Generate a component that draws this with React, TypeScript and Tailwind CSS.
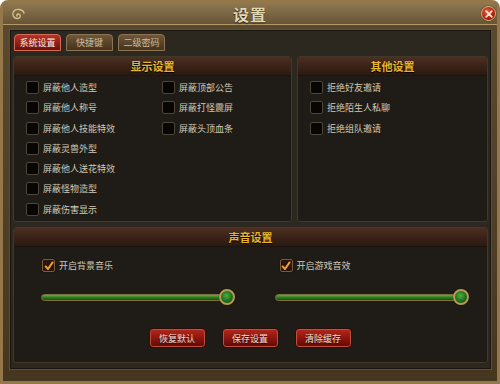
import React from "react";

const FONT = "font-['Noto_Sans_CJK_SC','Noto_Sans',sans-serif]";

function Check({ checked }: { checked?: boolean }) {
  if (checked) {
    return (
      <span className="w-[13px] h-[13px] rounded-[2px] border border-[#7a5b3c] bg-[#2c130b] flex items-center justify-center shrink-0 shadow-[0_0_1px_#000]">
        <svg width="10" height="10" viewBox="0 0 10 10">
          <path d="M1.6 5.4 L4 8 L8.6 1.4" stroke="#f2a431" strokeWidth="1.9" fill="none" strokeLinecap="round" strokeLinejoin="round" />
        </svg>
      </span>
    );
  }
  return <span className="w-[13px] h-[13px] rounded-[2px] border border-[#4d4638] bg-[#070605] shrink-0" />;
}

function Item({ label, checked }: { label: string; checked?: boolean }) {
  return (
    <div className="h-[13px] flex items-center gap-[4px]">
      <Check checked={checked} />
      <span className="text-[9px] leading-none text-[#d2c9b6] whitespace-nowrap">{label}</span>
    </div>
  );
}

function Header({ title }: { title: string }) {
  return (
    <div className="h-[19px] shrink-0 flex items-center justify-center bg-gradient-to-b from-[#4e2f21] via-[#3a2318] to-[#2a1a12] border-b border-[#1a130e] rounded-t-[3px]">
      <span className="text-[11px] leading-none font-bold text-[#e9b52c] [text-shadow:0_1px_1px_#000]">{title}</span>
    </div>
  );
}

function Slider() {
  return (
    <div className="relative w-[194px] h-[16px] flex items-center">
      <div className="h-[7px] w-[190px] rounded-full border border-[#7d7040] bg-gradient-to-b from-[#5fb040] via-[#2e7c1e] to-[#1a5010]" />
      <div className="absolute right-0 top-0 w-[16px] h-[16px] rounded-full border-2 border-[#b59a52] bg-[radial-gradient(circle_at_45%_40%,#4cae44,#1b6a18_60%,#0c3a0a)] shadow-[0_0_1px_#000]" />
    </div>
  );
}

function Btn({ label }: { label: string }) {
  return (
    <div className="w-[57px] h-[20px] rounded-[4px] border border-[#2a0d08] shadow-[inset_0_0_0_1px_#c0503c] bg-gradient-to-b from-[#b5281c] via-[#8d1510] to-[#5c0b08] flex items-center justify-center">
      <span className="text-[9px] leading-none text-[#f3e2d6] [text-shadow:0_1px_1px_#300]">{label}</span>
    </div>
  );
}

function Tab({ label, active }: { label: string; active?: boolean }) {
  return active ? (
    <div className="w-[47px] h-[17px] rounded-t-[4px] border border-[#d26a55] bg-gradient-to-b from-[#b8332a] to-[#6b100b] flex items-center justify-center">
      <span className="text-[9px] leading-none text-[#f5ece4]">{label}</span>
    </div>
  ) : (
    <div className="w-[47px] h-[17px] rounded-t-[4px] border border-[#8c7352] bg-gradient-to-b from-[#6f5838] to-[#44331f] flex items-center justify-center">
      <span className="text-[9px] leading-none text-[#cdbd9c]">{label}</span>
    </div>
  );
}

export default function App() {
  return (
    <div className={`w-[500px] h-[384px] border-[3px] border-[#94784a] rounded-t-[8px] bg-gradient-to-b from-[#5a4a30] to-[#45371f] flex flex-col overflow-hidden ${FONT}`}>
      <div className="relative h-[22px] shrink-0 flex items-center justify-center bg-gradient-to-b from-[#8e7852] to-[#685436] border-b border-[#b09a68]">
        <svg className="absolute left-[7px] top-[4px]" width="16" height="14" viewBox="0 0 16 14">
          <path d="M14 6 C13 2, 6 1, 3.5 4.5 C1.5 8, 4 12, 8 11.5 C11 11, 11 7.5, 8.5 7 C7 6.8, 6.3 8, 7 9" stroke="#d3bf8c" strokeWidth="1.4" fill="none" strokeLinecap="round" />
        </svg>
        <span className="text-[16px] leading-none font-bold text-[#e3d6b2] tracking-[1px] [text-shadow:0_1px_1px_#2a1e0e]">设置</span>
        <div className="absolute right-[1px] top-[3px] w-[15px] h-[15px] rounded-full border border-[#d8b878] bg-[radial-gradient(circle_at_40%_35%,#ec5a40,#b01c10_60%,#6e0a05)] flex items-center justify-center shadow-[0_0_1px_#000]">
          <svg width="8" height="8" viewBox="0 0 8 8">
            <path d="M1.2 1.2 L6.8 6.8 M6.8 1.2 L1.2 6.8" stroke="#fbe6d0" strokeWidth="1.7" strokeLinecap="round" />
          </svg>
        </div>
      </div>
      <div className="flex-1 pt-[4px] pl-[6px] pr-[5px] pb-[11px]">
        <div className="h-full border border-[#5f5035] bg-[#2d281f] flex flex-col px-[3px] pt-[5px] shadow-[inset_0_0_0_1px_#1a160f]">
          <div className="flex gap-[5px] pl-[1px] h-[16px] items-end">
            <Tab label="系统设置" active />
            <Tab label="快捷键" />
            <Tab label="二级密码" />
          </div>
          <div className="h-[5px] shrink-0" />
          <div className="flex gap-[5px] h-[166px] shrink-0">
            <div className="w-[279px] h-full rounded-[3px] border border-[#403828] bg-[#1f1c17] flex flex-col">
              <Header title="显示设置" />
              <div className="flex pl-[12px] pt-[5px]">
                <div className="w-[136px] flex flex-col gap-[7.3px]">
                  <Item label="屏蔽他人造型" />
                  <Item label="屏蔽他人称号" />
                  <Item label="屏蔽他人技能特效" />
                  <Item label="屏蔽灵兽外型" />
                  <Item label="屏蔽他人送花特效" />
                  <Item label="屏蔽怪物造型" />
                  <Item label="屏蔽伤害显示" />
                </div>
                <div className="flex flex-col gap-[7.3px]">
                  <Item label="屏蔽顶部公告" />
                  <Item label="屏蔽打怪震屏" />
                  <Item label="屏蔽头顶血条" />
                </div>
              </div>
            </div>
            <div className="flex-1 h-full rounded-[3px] border border-[#403828] bg-[#1f1c17] flex flex-col">
              <Header title="其他设置" />
              <div className="flex flex-col gap-[7.3px] pl-[12px] pt-[5px]">
                <Item label="拒绝好友邀请" />
                <Item label="拒绝陌生人私聊" />
                <Item label="拒绝组队邀请" />
              </div>
            </div>
          </div>
          <div className="h-[5px] shrink-0" />
          <div className="h-[136px] shrink-0 rounded-[3px] border border-[#403828] bg-[#1f1c17] flex flex-col">
            <Header title="声音设置" />
            <div className="grid grid-cols-2 pt-[12px]">
              <div className="flex flex-col pl-[28px]">
                <Item label="开启背景音乐" checked />
                <div className="h-[17px]" />
                <div className="-ml-[1px]"><Slider /></div>
              </div>
              <div className="flex flex-col pl-[29px]">
                <Item label="开启游戏音效" checked />
                <div className="h-[17px]" />
                <div className="-ml-[5px]"><Slider /></div>
              </div>
            </div>
            <div className="flex justify-center gap-[16px] pt-[23px] pr-[1px]">
              <Btn label="恢复默认" />
              <Btn label="保存设置" />
              <Btn label="清除缓存" />
            </div>
          </div>
        </div>
      </div>
    </div>
  );
}
